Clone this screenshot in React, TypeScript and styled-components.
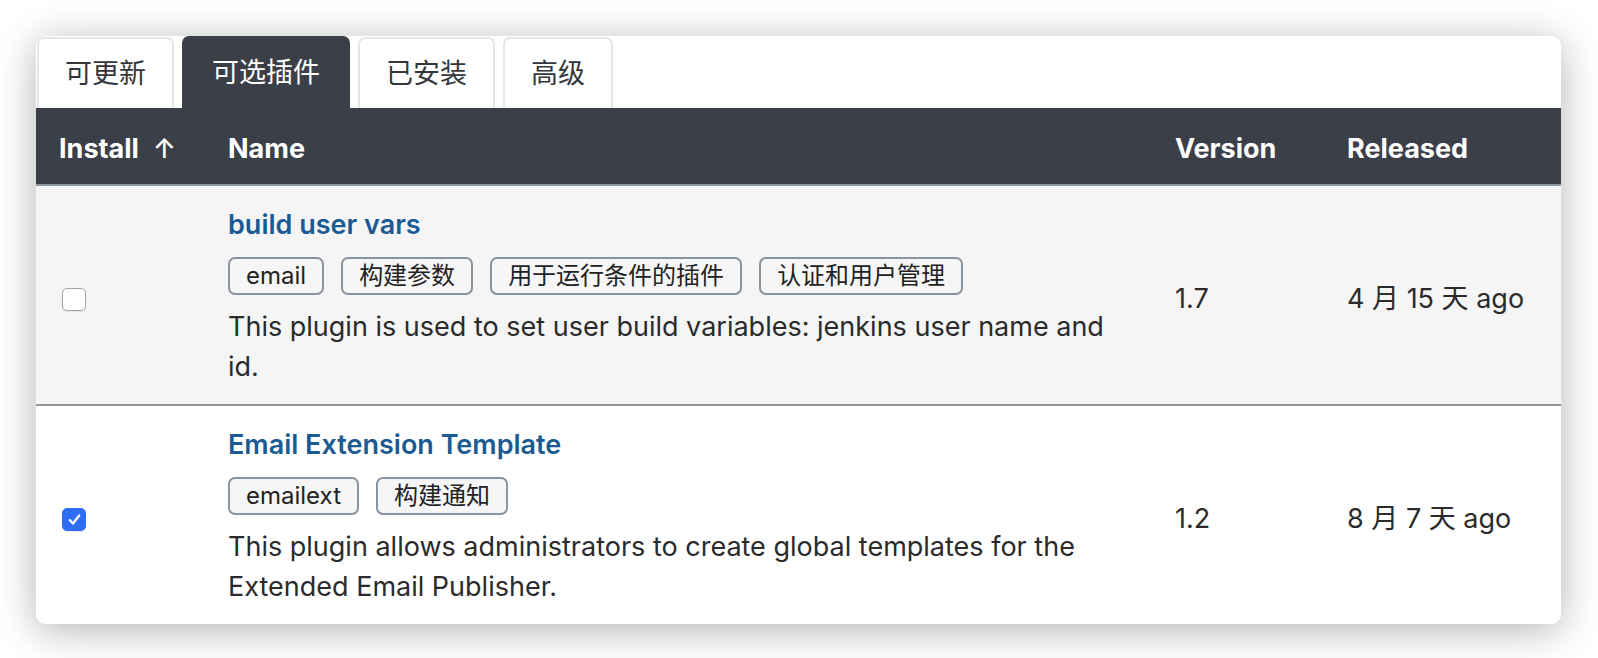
import styled, { createGlobalStyle } from 'styled-components';

interface IPlugin {
  id: string;
  name: string;
  tags: string[];
  description: string;
  version: string;
  released: string;
  checked: boolean;
}

const plugins: IPlugin[] = [
  {
    id: 'build-user-vars',
    name: 'build user vars',
    tags: ['email', '构建参数', '用于运行条件的插件', '认证和用户管理'],
    description:
      'This plugin is used to set user build variables: jenkins user name and id.',
    version: '1.7',
    released: '4 月 15 天 ago',
    checked: false,
  },
  {
    id: 'email-ext-template',
    name: 'Email Extension Template',
    tags: ['emailext', '构建通知'],
    description:
      'This plugin allows administrators to create global templates for the Extended Email Publisher.',
    version: '1.2',
    released: '8 月 7 天 ago',
    checked: true,
  },
];

const tabs = ['可更新', '可选插件', '已安装', '高级'];

const GlobalStyle = createGlobalStyle`
  body {
    margin: 0;
    background: #ffffff;
    font-family: Inter, "Noto Sans CJK SC", sans-serif;
    color: #2b2b2b;
  }
`;

const Page = styled.div`
  padding: 36px 37px 36px 36px;
`;

const Card = styled.div`
  width: 1525px;
  background: #ffffff;
  border-radius: 10px;
  overflow: hidden;
  box-shadow: 0 6px 40px rgba(0, 0, 0, 0.3);
`;

const TabBar = styled.div`
  display: flex;
  align-items: flex-end;
  gap: 8px;
  height: 72px;
  padding-left: 1px;
`;

const Tab = styled.button<{ $active?: boolean }>`
  box-sizing: border-box;
  height: ${(p) => (p.$active ? '72px' : '71px')};
  padding: 0 ${(p) => (p.$active ? '28px' : '26px')};
  border: 2px solid ${(p) => (p.$active ? '#3b4048' : '#e3e7ec')};
  border-bottom: none;
  border-radius: 7px 7px 0 0;
  background: ${(p) => (p.$active ? '#3b4048' : '#ffffff')};
  color: ${(p) => (p.$active ? '#ffffff' : '#33363b')};
  font-family: inherit;
  font-size: 27px;
  line-height: 40px;
  cursor: pointer;
`;

const Table = styled.table`
  width: 100%;
  border-collapse: separate;
  border-spacing: 0;
  table-layout: fixed;
`;

const HeadCell = styled.th<{ $width: number }>`
  box-sizing: border-box;
  width: ${(p) => p.$width}px;
  padding: 21px 23px 15px;
  background: #3b4048;
  border-bottom: 2px solid #8f99a3;
  color: #ffffff;
  font-size: 27px;
  line-height: 40px;
  font-weight: 700;
  text-align: left;
  white-space: nowrap;
`;

const SortArrow = styled.span`
  margin-left: 14px;
  font-weight: 500;
`;

const Row = styled.tr<{ $shaded: boolean }>`
  background: ${(p) => (p.$shaded ? '#f5f5f5' : '#ffffff')};
`;

const Cell = styled.td<{ $divider: boolean }>`
  padding: 8px 23px 0;
  vertical-align: middle;
  font-size: 27px;
  line-height: 40px;
  color: #2b2b2b;
  border-bottom: ${(p) => (p.$divider ? '2px solid #8e969e' : 'none')};
`;

const NameCell = styled(Cell)`
  padding: 19px 23px 17px;
`;

const CheckBox = styled.span<{ $checked: boolean }>`
  box-sizing: border-box;
  display: flex;
  align-items: center;
  justify-content: center;
  width: 24px;
  height: 23px;
  margin-left: 3px;
  border-radius: 5px;
  border: 1.5px solid ${(p) => (p.$checked ? '#2f6ef4' : '#a3a3a3')};
  background: ${(p) => (p.$checked ? '#2f6ef4' : '#ffffff')};
  box-shadow: 0 1px 1px rgba(0, 0, 0, 0.08);
`;

const Title = styled.a`
  display: block;
  color: #1b5a93;
  font-weight: 600;
  text-decoration: none;
`;

const Tags = styled.div`
  display: flex;
  flex-wrap: wrap;
  gap: 17px;
  margin: 12px 0;
`;

const Tag = styled.span`
  box-sizing: border-box;
  height: 38px;
  padding: 0 16px;
  border: 2px solid #8a949e;
  border-radius: 7px;
  background: #f6f6f7;
  color: #222222;
  font-size: 24px;
  line-height: 34px;
`;

const Description = styled.p`
  margin: 0;
`;

const Check = () => (
  <svg width="17" height="17" viewBox="0 0 16 16" fill="none">
    <path
      d="M3.6 8.6 L6.6 11.8 L12.4 4.2"
      stroke="#ffffff"
      strokeWidth="2.2"
      strokeLinecap="round"
      strokeLinejoin="round"
    />
  </svg>
);

export default function App() {
  return (
    <>
      <GlobalStyle />
      <Page>
        <Card>
          <TabBar>
            {tabs.map((tab) => (
              <Tab key={tab} $active={tab === '可选插件'}>
                {tab}
              </Tab>
            ))}
          </TabBar>
          <Table>
            <thead>
              <tr>
                <HeadCell $width={169}>
                  Install<SortArrow>↑</SortArrow>
                </HeadCell>
                <HeadCell $width={947}>Name</HeadCell>
                <HeadCell $width={172}>Version</HeadCell>
                <HeadCell $width={237}>Released</HeadCell>
              </tr>
            </thead>
            <tbody>
              {plugins.map((plugin, index) => {
                const divider = index < plugins.length - 1;
                return (
                  <Row key={plugin.id} $shaded={index % 2 === 0}>
                    <Cell $divider={divider}>
                      <CheckBox $checked={plugin.checked}>
                        {plugin.checked && <Check />}
                      </CheckBox>
                    </Cell>
                    <NameCell $divider={divider}>
                      <Title href="#">{plugin.name}</Title>
                      <Tags>
                        {plugin.tags.map((tag) => (
                          <Tag key={tag}>{tag}</Tag>
                        ))}
                      </Tags>
                      <Description>{plugin.description}</Description>
                    </NameCell>
                    <Cell $divider={divider}>{plugin.version}</Cell>
                    <Cell $divider={divider}>{plugin.released}</Cell>
                  </Row>
                );
              })}
            </tbody>
          </Table>
        </Card>
      </Page>
    </>
  );
}
